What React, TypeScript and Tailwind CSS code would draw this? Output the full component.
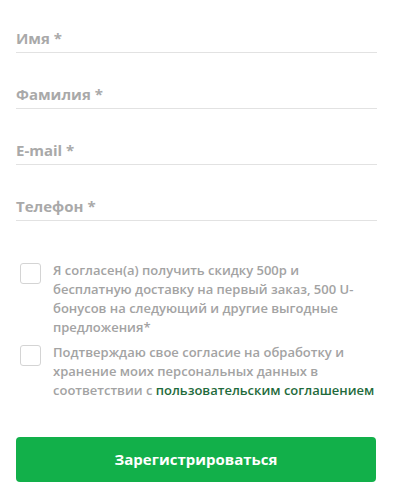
const fields = ['Имя *', 'Фамилия *', 'E-mail *', 'Телефон *'];

function Field({ label }: { label: string }) {
  return (
    <div className="flex h-[41px] items-end border-b border-[#e2e2e2] pb-[4px]">
      <span className="text-[15px] leading-[20px] font-bold text-[#a9a9a9]">{label}</span>
    </div>
  );
}

function Agreement({ children }: { children: React.ReactNode }) {
  return (
    <label className="flex items-start">
      <span className="mt-[1.5px] ml-[4px] h-[21px] w-[21px] shrink-0 rounded-[3px] border border-[#d4d4d4] bg-white" />
      <span className="ml-[12px] w-[324px] text-[13px] leading-[19px] font-semibold text-[#a3a3a3]">
        {children}
      </span>
    </label>
  );
}

export default function App() {
  return (
    <div
      className="min-h-screen bg-white px-[16px] pt-[12px]"
      style={{ fontFamily: '"Open Sans", "Noto Sans", sans-serif' }}
    >
      <div className="flex w-[361px] flex-col gap-[15px]">
        {fields.map((f) => (
          <Field key={f} label={f} />
        ))}
      </div>

      <div className="mt-[40px] flex flex-col gap-[6px]">
        <Agreement>
          Я согласен(а) получить скидку 500р и бесплатную доставку на первый заказ, 500 U-бонусов на
          следующий и другие выгодные предложения*
        </Agreement>
        <Agreement>
          Подтверждаю свое согласие на обработку и хранение моих персональных данных в соответствии
          с <a className="text-[#1f6b3c]">пользовательским соглашением</a>
        </Agreement>
      </div>

      <button className="mt-[37px] flex h-[45px] w-[360px] items-center justify-center rounded-[4px] bg-[#12b04a] text-[15px] font-bold text-white">
        Зарегистрироваться
      </button>
    </div>
  );
}
